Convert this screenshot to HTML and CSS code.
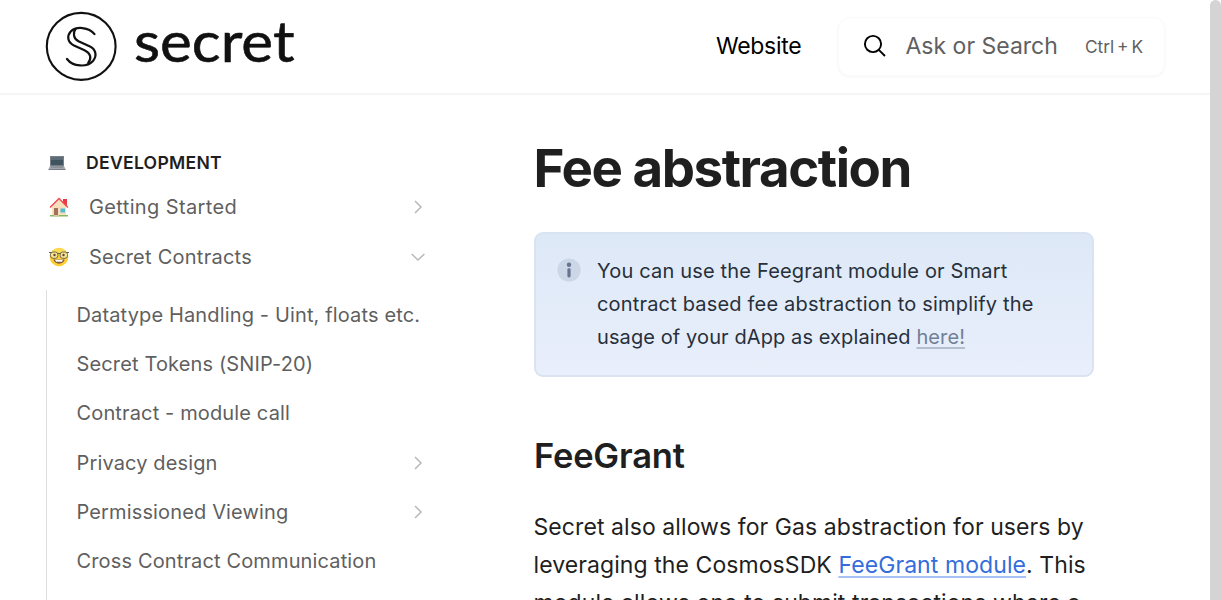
FILE: index.html
```html
<!DOCTYPE html>
<html lang="en">
<head>
<meta charset="utf-8">
<title>Fee abstraction</title>
<link rel="stylesheet" href="styles.css">
</head>
<body>
<div class="viewport">
  <div class="page">
    <header class="header">
      <svg class="logo" width="252" height="72" viewBox="0 0 252 72" role="img" aria-label="secret">
        <g fill="none" stroke="#111" stroke-linecap="round" stroke-linejoin="round">
          <ellipse cx="36.2" cy="35.400" rx="34.4" ry="33.5" stroke-width="2.1"/>
          <path stroke-width="2.2" d="M49.500 23.200 C44 16 31 14.800 25.500 20.800 C21.500 25.500 22.800 31.500 29 34.500 L39 39 C46.500 42.500 46.500 48 43.200 52"/>
          <path stroke-width="2.2" d="M22 48 C28 56 42 56.500 48 50 C52.500 44.500 50.500 38 45 35.500 L33.500 30.300 C28 27.500 28 21.500 30.500 18.200"/>
        </g>
        <text class="logo-word" x="89" y="50.500" textLength="160.500" lengthAdjust="spacingAndGlyphs">secret</text>
      </svg>
      <a class="nav-link">Website</a>
      <div class="search">
        <svg class="search-icon" width="24" height="24" viewBox="0 0 24 24" fill="none" stroke="#000" stroke-width="1.9"><circle cx="10" cy="10" r="8.100"/><path d="M15.800 15.800 22 22"/></svg>
        <span class="search-label">Ask or Search</span>
        <span class="search-key">Ctrl + K</span>
      </div>
    </header>
    <div class="body">
      <nav class="sidebar">
        <div class="group-title">
          <svg class="emoji laptop" width="18" height="16" viewBox="0 0 18 16"><path fill="#778087" d="M2 1h14v10H2z"/><path fill="#40545f" d="M3 2h12v8H3z"/><path fill="#5b6c76" d="M3 2h12v3H3z"/><path fill="#a1a7ac" d="M2 11h14l1.500 3h-17z"/><path fill="#777f85" d="M.5 14h17v1H.5zM3 11.500h12v1H3z"/></svg>
          <span>DEVELOPMENT</span>
        </div>
        <a class="item top"><svg class="emoji" width="20" height="20" viewBox="0 0 20 20"><path fill="#e53945" d="M14 2h4v7h-4z"/><path fill="#f8dfbd" d="M3 9 10 2l7 7v9H3z"/><path fill="none" stroke="#f34b51" stroke-width="1.500" d="M1 10.500 10 1.500l9 9"/><path fill="#a0725b" d="M5 11h4v7H5z"/><path fill="#53b9d1" d="M11.500 11.500h4.500v4h-4.500z"/><path fill="#86ba62" d="M1 18h18v1.500H1z"/><path fill="#d5c7a0" d="M5 18h5v1.500H5z"/></svg><span class="wide">Getting Started</span><svg class="chevron" width="14" height="14" viewBox="0 0 14 14"><path d="m4 1 6 6-6 6"/></svg></a>
        <a class="item top open"><svg class="emoji" width="20" height="20" viewBox="0 0 20 20"><circle cx="10" cy="10" r="9.300" fill="#ffcf37"/><path fill="#fbdb54" d="M2 6C5-.5 15-.5 18 6z"/><g fill="#f7e48f" stroke="#62604f" stroke-width=".9"><rect x="1.500" y="5" width="7.300" height="6.300" rx="2.500"/><rect x="11.200" y="5" width="7.300" height="6.300" rx="2.500"/></g><path stroke="#62604f" d="M0 5.500h2m6.500 1h3m6.500-1h2"/><circle cx="5.500" cy="8" r="1.200" fill="#5b4737"/><circle cx="14.500" cy="8" r="1.200" fill="#5b4737"/><path fill="#805a3b" d="M4.500 12.500h11c-.5 5.500-10.500 5.500-11 0z"/><path fill="#fff" d="M6 12.800h8l-1 2H7z"/></svg><span>Secret Contracts</span><svg class="chevron" width="14" height="14" viewBox="0 0 14 14"><path d="m.6 4 6.400 6 6.400-6"/></svg></a>
        <div class="children">
          <a class="item"><span>Datatype Handling - Uint, floats etc.</span></a>
          <a class="item"><span>Secret Tokens (SNIP-20)</span></a>
          <a class="item"><span>Contract - module call</span></a>
          <a class="item"><span>Privacy design</span><svg class="chevron" width="14" height="14" viewBox="0 0 14 14"><path d="m4 1 6 6-6 6"/></svg></a>
          <a class="item"><span>Permissioned Viewing</span><svg class="chevron" width="14" height="14" viewBox="0 0 14 14"><path d="m4 1 6 6-6 6"/></svg></a>
          <a class="item"><span>Cross Contract Communication</span></a>
        </div>
      </nav>
      <main class="content">
        <h1>Fee abstraction</h1>
        <aside class="callout">
          <svg class="info" width="24" height="24" viewBox="0 0 24 24"><circle cx="12" cy="12" r="11.600" fill="#cbd6e7"/><circle cx="12" cy="6.700" r="2.200" fill="#65758f"/><rect x="10.400" y="10.200" width="3.200" height="9.300" rx="1.400" fill="#65758f"/></svg>
          <p>You can use the Feegrant module or Smart<br>contract based fee abstraction to simplify the<br><span class="tight">usage of your dApp as explained <a>here!</a></span></p>
        </aside>
        <h2>FeeGrant</h2>
        <p class="text">Secret also allows for Gas abstraction for users by<br>leveraging the CosmosSDK <a>FeeGrant module</a>. This<br>module allows one to submit transactions where a</p>
      </main>
    </div>
  </div>
  <div class="scrollbar"></div>
</div>
</body>
</html>
```
FILE: styles.css
```css
* { box-sizing: border-box; }
body { margin: 0; overflow: hidden; background: #fff; color: #1f1f1f; font-family: Inter, "Liberation Sans", sans-serif; }
h1, h2, p { margin: 0; white-space: nowrap; }
svg { display: block; flex: none; overflow: visible; }
.viewport { display: flex; height: 600px; overflow: hidden; }
.page { width: 1210px; flex: none; }
.scrollbar { width: 11px; height: 620px; border-radius: 6px; background: #d4d4d4; }
.header { display: flex; align-items: center; height: 95px; padding: 0 45px; border-bottom: 2px solid #f5f5f5; }
.logo-word { font-family: Lato, sans-serif; font-size: 56px; fill: #111; stroke: #111; stroke-width: .6; }
.nav-link { margin-left: auto; width: 85px; margin-right: 37px; padding-bottom: 2px; font-size: 23px; letter-spacing: -.3px; color: #000; white-space: nowrap; }
.search { display: flex; align-items: center; width: 327px; height: 59px; padding: 0 21px 2px 23.5px; border: 1px solid #fafafa; border-radius: 12px; box-shadow: 0 1px 3px #0000000c; color: #606060; white-space: nowrap; }
.search-icon { margin-right: 19px; }
.search-label { font-size: 23px; }
.search-key { margin-left: auto; padding-top: 1px; font-size: 17.3px; word-spacing: -2px; }
.body { display: flex; }
.sidebar { width: 489px; flex: none; padding: 52px 60px 0 46px; }
.group-title { display: flex; align-items: center; height: 30px; font-size: 17.6px; font-weight: 600; letter-spacing: .27px; }
.laptop { margin: 1px 20px 0 2px; }
.item { display: flex; align-items: center; height: 49.25px; font-size: 20px; letter-spacing: .14px; color: #5f5f5f; white-space: nowrap; }
.top { height: 50px; padding-left: 3px; letter-spacing: .25px; }
.wide { letter-spacing: .37px; }
.top .emoji { margin-right: 20px; }
.group-title + .top { margin-top: 5px; }
.chevron { margin-left: auto; margin-right: 4px; fill: none; stroke: #b8b8b8; stroke-width: 1.5; }
.children { margin-top: 10px; padding-left: 29.5px; height: 340px; border-left: 1px solid #dedede; }
.children .item:first-child { margin-top: -1.7px; }
.content { width: 560px; margin-left: 45px; padding-top: 41px; }
h1 { height: 64px; margin-left: -.5px; line-height: 64px; font-size: 52.8px; font-weight: 700; letter-spacing: -1.45px; }
.callout { display: flex; height: 145px; margin-top: 32px; padding: 21px 20.5px; border: 2px solid #d9e3f1; border-radius: 9px; background: linear-gradient(#dde8f7, #e9effb); color: #27303a; }
.callout p { margin-left: 16.5px; font-size: 20px; letter-spacing: .18px; line-height: 33px; }
.callout .tight { letter-spacing: .1px; }
.info { margin-top: 3px; }
a { text-decoration: none; }
.callout p a { color: #718096; text-decoration: underline #b3bfd1 2px; text-underline-offset: 3px; }
h2 { height: 44px; line-height: 44px; margin-top: 57px; font-size: 34.5px; font-weight: 600; letter-spacing: -.2px; }
.text { margin-top: 30px; margin-left: -.5px; font-size: 23px; letter-spacing: .08px; line-height: 38.1px; }
.text a { color: #346ddb; text-decoration: underline #a6c1f5 2px; text-underline-offset: 3px; }
```
